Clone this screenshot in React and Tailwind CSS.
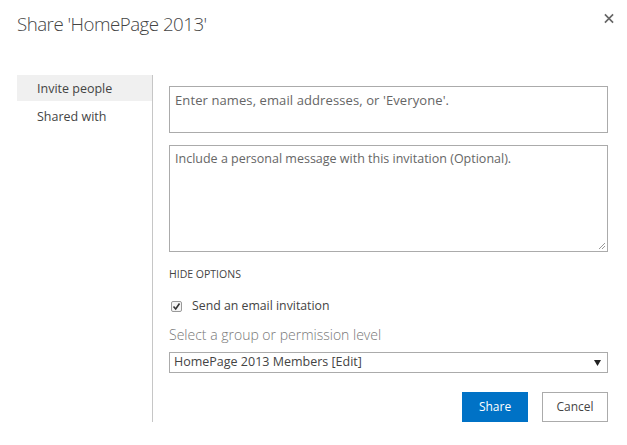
import React from "react";

const font = { fontFamily: '"Open Sans", "Noto Sans", sans-serif' };

export default function App() {
  return (
    <div className="w-[627px] h-[445px] bg-white text-[#444] relative" style={font}>
      <div className="flex items-start justify-between pl-[17px] pr-[13px] pt-[10px] h-[75px]">
        <h1 className="text-[18.7px] font-light leading-[28px] text-[#444] tracking-[-0.5px]">Share 'HomePage 2013'</h1>
        <button className="mt-[3px] w-[10px] h-[10px] flex items-center justify-center">
          <svg width="11" height="11" viewBox="0 0 11 11">
            <path d="M1 1 L10 10 M10 1 L1 10" stroke="#666" strokeWidth="1.8" />
          </svg>
        </button>
      </div>
      <div className="flex pl-[17px]">
        <div className="w-[135px] flex flex-col">
          <div className="h-[26px] bg-[#f0f0f0] pl-[20px] pt-[5px] leading-[18px] text-[12.5px] text-[#444]">Invite people</div>
          <div className="h-[28px] pl-[20px] pt-[7px] leading-[18px] text-[12.5px] text-[#444]">Shared with</div>
        </div>
        <div className="w-[1px] h-[347px] bg-[#c6c6c6]"></div>
        <div className="pl-[16px] w-[455px] flex flex-col">
          <div className="mt-[11px] h-[47px] border border-[#ababab] px-[5px] pt-[4px] text-[13px] text-[#666] tracking-[0.1px]">
            Enter names, email addresses, or 'Everyone'.
          </div>
          <div className="mt-[12px] h-[107px] border border-[#ababab] px-[5px] pt-[4px] text-[12.5px] text-[#666] relative">
            Include a personal message with this invitation (Optional).
            <svg className="absolute right-[1px] bottom-[1px]" width="8" height="8" viewBox="0 0 8 8">
              <path d="M7 1 L1 7 M7 4 L4 7" stroke="#999" strokeWidth="1" />
            </svg>
          </div>
          <div className="mt-[14px] text-[10.5px] leading-[16px] text-[#444] uppercase">Hide options</div>
          <div className="mt-[16px] flex items-center h-[16px]">
            <div className="ml-[2px] w-[11px] h-[11px] border border-[#999] rounded-[2px] bg-[#f4f4f4] flex items-center justify-center">
              <svg width="9" height="9" viewBox="0 0 9 9">
                <path d="M1.5 4.5 L3.7 7 L7.5 1.5" stroke="#333" strokeWidth="1.6" fill="none" />
              </svg>
            </div>
            <span className="ml-[10px] text-[12.3px] text-[#444]">Send an email invitation</span>
          </div>
          <div className="mt-[10px] text-[14px] font-light leading-[22px] text-[#777]">Select a group or permission level</div>
          <div className="mt-[6px] h-[21px] border border-[#ababab] flex items-center justify-between pl-[4px] pr-[6px] text-[12.5px] text-[#444]">
            <span>HomePage 2013 Members [Edit]</span>
            <svg width="7" height="6" viewBox="0 0 7 6">
              <path d="M0 0 L7 0 L3.5 6 Z" fill="#222" />
            </svg>
          </div>
          <div className="mt-[19px] flex justify-end gap-[14px]">
            <button className="w-[66px] h-[30px] bg-[#0072c6] text-white text-[12px]">Share</button>
            <button className="w-[66px] h-[30px] border border-[#ababab] bg-white text-[#444] text-[12px]">Cancel</button>
          </div>
        </div>
      </div>
    </div>
  );
}
